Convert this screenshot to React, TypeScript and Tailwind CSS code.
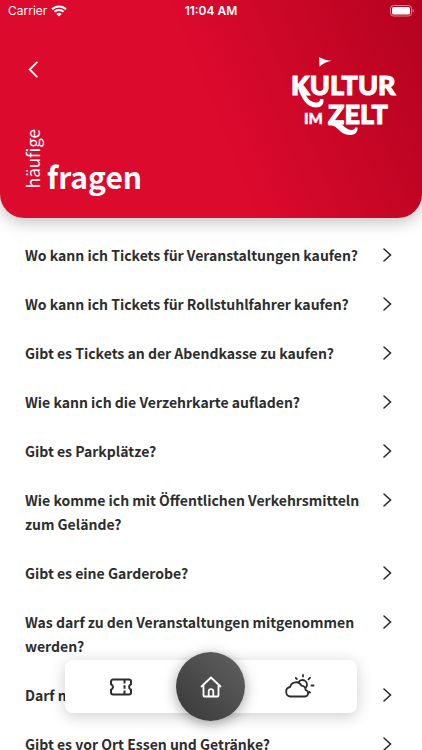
const QUESTIONS = [
  'Wo kann ich Tickets für Veranstaltungen kaufen?',
  'Wo kann ich Tickets für Rollstuhlfahrer kaufen?',
  'Gibt es Tickets an der Abendkasse zu kaufen?',
  'Wie kann ich die Verzehrkarte aufladen?',
  'Gibt es Parkplätze?',
  'Wie komme ich mit Öffentlichen Verkehrsmitteln zum Gelände?',
  'Gibt es eine Garderobe?',
  'Was darf zu den Veranstaltungen mitgenommen werden?',
  'Darf man rauchen?',
  'Gibt es vor Ort Essen und Getränke?',
];

function StatusBar() {
  return (
    <div className="grid grid-cols-3 items-center px-2 pt-[3px] font-['Inter',sans-serif] text-xs leading-4">
      <div className="flex items-center gap-1">
        <span>Carrier</span>
        <svg width="16" height="12" viewBox="0 0 16 12" fill="none" stroke="currentColor" strokeWidth="2">
          <path d="M1 4.3a10 10 0 0 1 14 0" />
          <path d="M3.4 6.8a6.6 6.6 0 0 1 9.2 0" />
          <path d="M8 11.6 5.4 9a3.7 3.7 0 0 1 5.2 0Z" fill="currentColor" stroke="none" />
        </svg>
      </div>
      <span className="text-center font-semibold">11:04 AM</span>
      <svg className="justify-self-end" width="24" height="12" viewBox="0 0 24 12" fill="none">
        <rect x="0.5" y="0.5" width="21" height="10.5" rx="3" stroke="#fff" strokeOpacity="0.5" />
        <rect x="2" y="2" width="18" height="7.5" rx="1.6" fill="#fff" />
        <path d="M22.8 4v3.6c.7-.3 1.1-1 1.1-1.8s-.4-1.5-1.1-1.8Z" fill="#fff" fillOpacity="0.6" />
      </svg>
    </div>
  );
}

function Logo() {
  return (
    <svg
      className="overflow-visible font-['Lato',sans-serif] font-black"
      width="108"
      height="80"
      viewBox="0 0 108 80"
      fill="#fff"
      stroke="#fff"
      role="img"
      aria-label="Kultur im Zelt"
    >
      <path d="M29 0c4 2.500 8 3.500 13 3.700-5 .8-9 2.800-12.500 6Z" stroke="none" />
      <text x="1" y="38" fontSize="27" strokeWidth="1">KULTUR</text>
      <text x="14" y="67" fontSize="15" strokeWidth="0.4">IM</text>
      <text x="38" y="67" fontSize="27" strokeWidth="1">ZELT</text>
      <path
        d="M8 31h5C15.500 39 19 45.500 26.500 45.500c2.500 0 3.500-1.500 3.500-3.500h3.300c1 5.500-2 8.500-7.500 8.500C16.500 50.500 11.500 41 8 31Z"
        stroke="none"
      />
      <path
        d="M38.500 64h6c7 0 10.500 9 16.500 9 3 0 4-1 4-2.500h2.500c.5 5-2.500 7.500-8 7.500-9.500 0-12-9.500-18-9.500h-3Z"
        stroke="none"
      />
    </svg>
  );
}

function Header() {
  return (
    <header className="relative z-10 shrink-0 rounded-b-3xl bg-[linear-gradient(68deg,#dc0a2d_50%,#b50220_100%)] pb-[30px] text-white shadow-[0_4px_16px_rgba(0,0,0,0.25)]">
      <StatusBar />
      <div className="flex items-start justify-between px-6 pt-[38px]">
        <button type="button" aria-label="Zurück" className="-mt-1 p-1 pt-2">
          <svg width="11" height="17" viewBox="0 0 11 18" fill="none" stroke="currentColor" strokeWidth="2" strokeLinecap="round">
            <path d="M9 1.500 1.500 9 9 16.500" />
          </svg>
        </button>
        <Logo />
      </div>
      <h1 className="-mt-2 flex items-end gap-1 pl-[23px]">
        <span className="rotate-180 text-[17px] leading-5 [writing-mode:vertical-rl]">häufige</span>
        <span className="text-[30px] leading-6 font-bold">fragen</span>
      </h1>
    </header>
  );
}

function TabBar() {
  return (
    <nav className="fixed inset-x-0 bottom-[37px] z-20 mx-auto grid h-[53px] w-[69%] grid-cols-[1fr_69px_1fr] content-center items-center rounded-lg bg-white shadow-[0_3px_16px_rgba(0,0,0,0.2)]">
      <a href="#tickets" aria-label="Tickets" className="justify-self-center">
        <svg width="22" height="18" viewBox="0 0 22 18" fill="none" stroke="currentColor" strokeWidth="2" strokeLinejoin="round">
          <path d="M3 1.500h16a2 2 0 0 1 2 2v2.700a3 3 0 0 0 0 5.600v2.700a2 2 0 0 1-2 2H3a2 2 0 0 1-2-2v-2.700a3 3 0 0 0 0-5.600V3.500a2 2 0 0 1 2-2Z" />
          <path d="M14.500 2v3.500M14.500 7.300v3.400M14.500 12.500V16" />
        </svg>
      </a>
      <a
        href="#home"
        aria-label="Startseite"
        className="flex size-[69px] items-center justify-center rounded-full bg-linear-to-tr from-[#383838] to-[#626262] text-white shadow-[0_3px_14px_rgba(0,0,0,0.35)]"
      >
        <svg width="22" height="22" viewBox="0 0 22 22" fill="none" stroke="currentColor" strokeWidth="1.8" strokeLinecap="round" strokeLinejoin="round">
          <path d="M1.500 10.500 11 1.500l9.500 9M3.500 9v10.500a1 1 0 0 0 1 1h13a1 1 0 0 0 1-1V9" />
          <path d="M8.700 20v-4.500a2.300 2.300 0 0 1 4.600 0V20" />
        </svg>
      </a>
      <a href="#wetter" aria-label="Wetter" className="justify-self-center">
        <svg className="overflow-visible" width="30" height="24" viewBox="1.5 1 30 24" fill="none" stroke="currentColor" strokeWidth="1.8" strokeLinecap="round" strokeLinejoin="round">
          <path d="M6 22.500a4.800 4.800 0 0 1-.4-9.500 6 6 0 0 1 11.300-1.300 4.600 4.600 0 0 1 4.200 4.300A3.300 3.300 0 0 1 20.500 22.500Z" />
          <path d="M14 8.200a4.600 4.600 0 1 1 7.500 5.300" />
          <path d="M18.500 1v1.500M11.300 4l1 1M25.600 3.700l-1.600 1.600M27 11.500h2M25 18l.6.600" />
        </svg>
      </a>
    </nav>
  );
}

export default function App() {
  return (
    <div className="flex h-screen flex-col overflow-hidden bg-white font-['Noto_Sans_CJK_SC',sans-serif] text-[#2d2d2d]">
      <Header />
      <main className="flex-1 overflow-y-auto [scrollbar-width:none]">
        <ul className="flex flex-col gap-[25px] p-[25px]">
          {QUESTIONS.map((question) => (
            <li key={question}>
              <button type="button" className="flex w-full items-start justify-between gap-4 text-left text-sm leading-6 font-bold">
                <span>{question}</span>
                <svg className="mt-1 mr-1 shrink-0" width="11" height="16" viewBox="0 0 11 16" fill="none" stroke="currentColor" strokeWidth="1.6" strokeLinecap="round">
                  <path d="M2 2 8.500 8 2 14" />
                </svg>
              </button>
            </li>
          ))}
        </ul>
      </main>
      <TabBar />
    </div>
  );
}
